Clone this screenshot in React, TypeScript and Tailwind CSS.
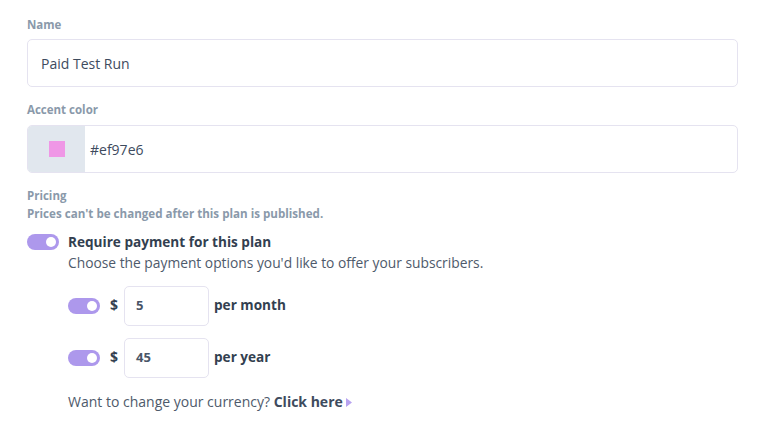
import React from "react";

function Toggle() {
  return (
    <div className="w-8 h-4 rounded-full bg-[#ad98ec] flex items-center justify-end pr-[3px] shrink-0">
      <div className="w-[10px] h-[10px] rounded-full bg-white" />
    </div>
  );
}

function PriceRow({ value, label }: { value: string; label: string }) {
  return (
    <div className="flex items-center h-10">
      <Toggle />
      <span className="ml-[10px] mb-[3px] text-[14px] font-bold text-[#333f50]">$</span>
      <div className="ml-[6px] w-[85px] h-10 border border-[#e5e3f0] rounded-[5px] flex items-center pl-[11px] text-[13px] font-bold text-[#4a5568]">
        {value}
      </div>
      <span className="ml-[5px] mb-[2px] text-[13.6px] font-bold text-[#333f50]">{label}</span>
    </div>
  );
}

export default function App() {
  return (
    <div className="w-[766px] h-[436px] bg-white px-[27px] pt-[17px]" style={{ fontFamily: "'Open Sans', sans-serif" }}>
      <div className="w-[711px]">
        <div className="text-[11.5px] font-bold text-[#8a99aa] leading-[16px]">Name</div>
        <div className="mt-[6px] h-[48px] border border-[#e5e3f0] rounded-[5px] flex items-center pl-[13px] text-[14px] text-[#3e4b5e]">
          Paid Test Run
        </div>
        <div className="mt-[15px] text-[11.5px] font-bold text-[#8a99aa] leading-[16px]">Accent color</div>
        <div className="mt-[7px] h-[48px] border border-[#e5e3f0] rounded-[5px] flex overflow-hidden">
          <div className="w-[57px] bg-[#e1e7ee] flex items-center justify-center">
            <div className="w-4 h-4 bg-[#ef97e6]" />
          </div>
          <div className="flex items-center pl-[5px] text-[14px] text-[#3e4b5e]">#ef97e6</div>
        </div>
        <div className="mt-[15px] text-[11.5px] font-bold text-[#8a99aa] leading-[16px]">Pricing</div>
        <div className="mt-[2px] text-[11.6px] font-bold text-[#8a99aa] leading-[16px]">Prices can't be changed after this plan is published.</div>
        <div className="mt-[11px] flex items-start">
          <div className="mt-[1px]"><Toggle /></div>
          <div className="ml-[9px]">
            <div className="text-[13.6px] font-bold text-[#333f50] leading-[18px]">Require payment for this plan</div>
            <div className="mt-[3px] text-[13.8px] text-[#4e5a6b] leading-[18px]">Choose the payment options you'd like to offer your subscribers.</div>
          </div>
        </div>
        <div className="ml-[41px] mt-[14px] flex flex-col gap-3">
          <PriceRow value="5" label="per month" />
          <PriceRow value="45" label="per year" />
          <div className="mt-[3px] text-[14px] leading-[18px] text-[#4e5a6b] flex items-center">
            Want to change your currency?&nbsp;<span className="font-bold text-[#3e4b5e]">Click here</span>
            <svg width="7" height="9" viewBox="0 0 7 9" className="ml-[3px]"><path d="M0 0 L6 4.5 L0 9 Z" fill="#b8a3f0" /></svg>
          </div>
        </div>
      </div>
    </div>
  );
}
